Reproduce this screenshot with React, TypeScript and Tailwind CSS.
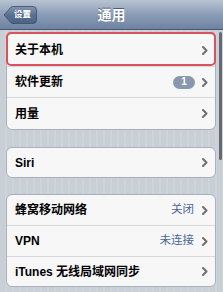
import React from "react";

const font = { fontFamily: '"Liberation Sans", "Noto Sans CJK SC", sans-serif' };

function Chevron() {
  return (
    <svg width="6" height="9" viewBox="0 0 6 9" className="shrink-0">
      <polyline points="1,1 4.5,4.5 1,8" fill="none" stroke="#6f6f6f" strokeWidth="2" strokeLinecap="round" strokeLinejoin="round" />
    </svg>
  );
}

function Row({
  label,
  value,
  badge,
  h,
  last,
  highlight,
}: {
  label: string;
  value?: string;
  badge?: string;
  h: string;
  last?: boolean;
  highlight?: boolean;
}) {
  return (
    <div className={`relative flex items-center justify-between pl-[8px] pr-[7px] ${h} ${last ? "" : "border-b border-[#d6d8db]"}`}>
      <span className="text-[12px] font-bold text-black leading-none">{label}</span>
      <div className="flex items-center">
        {value && <span className="text-[11.5px] text-[#4a6796] leading-none mr-[8px]">{value}</span>}
        {badge && (
          <span className="mr-[7px] flex h-[13px] w-[22px] items-center justify-center rounded-full bg-[#8898ae] text-[10px] font-bold leading-none text-white">
            {badge}
          </span>
        )}
        <Chevron />
      </div>
      {highlight && (
        <div className="pointer-events-none absolute left-[-1px] right-[-1px] top-[-2px] bottom-[0px] rounded-[5px] border-2 border-[#d9535b]" />
      )}
    </div>
  );
}

function Group({ children, className }: { children: React.ReactNode; className?: string }) {
  return (
    <div className={`ml-[6px] mr-[7px] rounded-[6px] border border-[#a9b0b8] bg-[#f7f7f7] ${className ?? ""}`}>
      {children}
    </div>
  );
}

export default function App() {
  return (
    <div
      style={font}
      className="relative h-[292px] w-[223px] overflow-hidden bg-[repeating-linear-gradient(90deg,#c8cfd6_0px,#c8cfd6_5px,#ced4da_5px,#ced4da_7px)]"
    >
      {/* nav bar */}
      <div className="relative flex h-[30px] items-center justify-center border-b border-[#4a5a72] bg-[linear-gradient(#b9c4d2,#8a9cb6_50%,#6e83a1)]">
        <div className="absolute left-[3px] top-[6px]">
          <svg width="34" height="18" viewBox="0 0 34 18">
            <defs>
              <linearGradient id="bb" x1="0" y1="0" x2="0" y2="1">
                <stop offset="0" stopColor="#8496b2" />
                <stop offset="0.5" stopColor="#5a7092" />
                <stop offset="1" stopColor="#4a6286" />
              </linearGradient>
            </defs>
            <path d="M1 9 L8 1.2 Q8.6 0.5 9.8 0.5 H30 Q33.5 0.5 33.5 4 V14 Q33.5 17.5 30 17.5 H9.8 Q8.6 17.5 8 16.8 Z" fill="url(#bb)" stroke="#3d4e68" strokeWidth="0.8" />
          </svg>
          <span className="absolute left-[11px] top-[4px] text-[8.5px] font-bold leading-none text-white">设置</span>
        </div>
        <span className="text-[14px] font-bold leading-none text-white [text-shadow:0_-1px_0_#4b5b75]">通用</span>
      </div>

      <Group className="mt-[3px]">
        <Row label="关于本机" h="h-[33px]" highlight />
        <Row label="软件更新" badge="1" h="h-[31px]" />
        <Row label="用量" h="h-[31px]" last />
      </Group>

      <Group className="mt-[17px]">
        <Row label="Siri" h="h-[29px]" last />
      </Group>

      <Group className="mt-[16px]">
        <Row label="蜂窝移动网络" value="关闭" h="h-[31px]" />
        <Row label="VPN" value="未连接" h="h-[31px]" />
        <Row label="iTunes 无线局域网同步" h="h-[29px]" last />
      </Group>

      {/* scroll indicator */}
      <div className="absolute right-[1px] top-[32px] h-[128px] w-[3px] rounded-full bg-[#3a3f47]/70" />
    </div>
  );
}
